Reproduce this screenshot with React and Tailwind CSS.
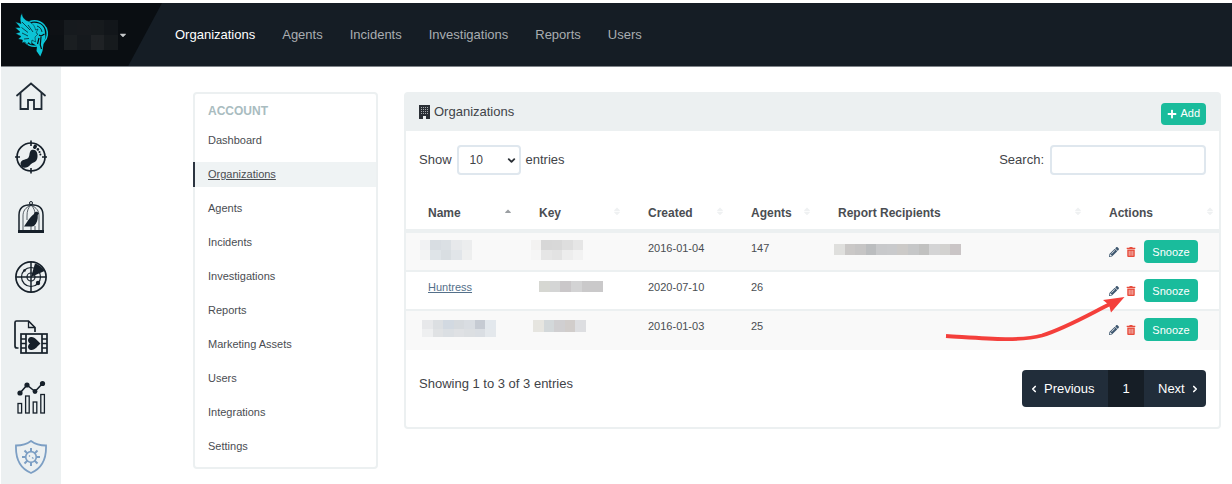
// src/pages/Organizations.jsx
import React, { useState } from "react";
import { FaPlus, FaPencilAlt, FaTrashAlt, FaCaretDown, FaCaretUp } from "react-icons/fa";
import { ChevronDown, ChevronLeft, ChevronRight } from "lucide-react";

const NAV_LINKS = ["Organizations", "Agents", "Incidents", "Investigations", "Reports", "Users"];

const ACCOUNT_LINKS = [
  "Dashboard",
  "Organizations",
  "Agents",
  "Incidents",
  "Investigations",
  "Reports",
  "Marketing Assets",
  "Users",
  "Integrations",
  "Settings",
];

const COLUMNS = [
  { label: "Name", width: "w-[111px]", sorted: true },
  { label: "Key", width: "w-[109px]" },
  { label: "Created", width: "w-[103px]" },
  { label: "Agents", width: "w-[87px]" },
  { label: "Report Recipients", width: "" },
  { label: "Actions", width: "w-[132px]" },
];

// Masked values: each entry is one line of colour blocks
const MASKS = {
  account: [
    ["bg-[#0e1115]", "bg-[#161a1e]", "bg-[#171a1e]", "bg-[#161a1d]", "bg-[#12161a]"],
    ["bg-[#0c1014]", "bg-[#1a1e21]", "bg-[#15191d]", "bg-[#1f2225]", "bg-[#161a1d]"],
  ],
  name1: [
    ["bg-[#f1f2f3]", "bg-[#d8dde2]", "bg-[#dbe0e4]", "bg-[#e7e9eb]", "bg-[#ecedee]"],
    ["bg-[#f3f4f4]", "bg-[#dfe4e8]", "bg-[#d9dee2]", "bg-[#e1e5e9]", "bg-[#eeefef]"],
  ],
  key1: [
    ["bg-[#f3f2f1]", "bg-[#d7d7d7]", "bg-[#d8d8d8]", "bg-[#dedede]", "bg-[#e6e6e6]"],
    ["bg-[#f6f6f6]", "bg-[#e6e6e6]", "bg-[#e3e3e3]", "bg-[#ededed]", "bg-[#f2f2f2]"],
  ],
  recipients1: [
    ["bg-[#dfdfdd]", "bg-[#cac8c7]", "bg-[#c6c5c5]", "bg-[#bbbdbf]", "bg-[#c8c9cb]", "bg-[#c9cacc]", "bg-[#cccac8]", "bg-[#c6c7c8]", "bg-[#c1c1c0]", "bg-[#d4d4d5]", "bg-[#d3d2d0]", "bg-[#cac5c6]"],
  ],
  key2: [["bg-[#d6d7d2]", "bg-[#d4d5d5]", "bg-[#cac7c9]", "bg-[#d3d3d4]", "bg-[#cac9ca]", "bg-[#cac9ca]"]],
  name3: [
    ["bg-[#e7e8ea]", "bg-[#dcdfe2]", "bg-[#d2d9e1]", "bg-[#d6dade]", "bg-[#d9dde2]", "bg-[#c6cbd3]", "bg-[#e3e8ed]"],
    ["bg-[#eeeff0]", "bg-[#e0e2e4]", "bg-[#dbdfe3]", "bg-[#dfe1e4]", "bg-[#dcdfe2]", "bg-[#dadee3]", "bg-[#e4e8ec]"],
  ],
  key3: [["bg-[#e6e5e0]", "bg-[#d3d8da]", "bg-[#d0cfd1]", "bg-[#d1cdcb]", "bg-[#dddee1]"]],
};

const ROWS = [
  { nameMask: "name1", keyMask: "key1", created: "2016-01-04", agents: 147, recipientsMask: "recipients1" },
  { name: "Huntress", keyMask: "key2", created: "2020-07-10", agents: 26 },
  { nameMask: "name3", keyMask: "key3", created: "2016-01-03", agents: 25 },
];

const MASK_SIZES = {
  account: "w-[68px] h-[30px]",
  name1: "-ml-2 w-[52px] h-5",
  key1: "-ml-2 w-[52px] h-5",
  recipients1: "-ml-1 mt-1 w-[127px] h-[11px]",
  key2: "mt-0.5 w-16 h-[11px]",
  name3: "-ml-1.5 mt-0.5 w-[74px] h-[17px]",
  key3: "-ml-1.5 mt-0.5 w-[53px] h-3",
};

const Mask = ({ id }) => (
  <div aria-hidden="true" className={`flex flex-col ${MASK_SIZES[id]}`}>
    {MASKS[id].map((line, i) => (
      <div key={i} className="flex flex-1">
        {line.map((color, j) => (
          <span key={j} className={`flex-1 ${color}`} />
        ))}
      </div>
    ))}
  </div>
);

const Logo = () => (
  <svg viewBox="0 0 34 44" className="w-[34px] h-11" fill="#0cc4d6" aria-hidden="true">
    <circle cx="20.500" cy="20.500" r="12.800" fill="none" stroke="#0cc4d6" strokeWidth="1.600" />
    {/* Helmet */}
    <path d="M18 10 C26 9 31 13 31 20 L31.500 24 L29.500 31 L28.500 38 L26.300 43.500 L22.500 38 L23 33 L18 30 Z" />
    {/* Wing */}
    <path
      d="M8 0 C8.500 4 10 6.500 14 8 C18 9.500 21 13 21.500 17 L24 16 L22 20 L24 21 L21 24 L21.500 29 L18 27 L17.500 32 L14.500 29.500 L13 32 L11 29 L8 30 L8.500 27 L4 26 L7 23.500 L1.500 20.500 L6 19 L1 14.500 L6 14.500 L1.300 8.700 L7 10.500 C5.500 7 6 3 8 0 Z"
      stroke="#0a0e12"
      strokeWidth="0.500"
    />
    <g stroke="#0a0e12" fill="none">
      <path d="M8 9 L16 17 M7.500 14.500 L14 19.500 M8 20 L14 23 M14 12 L19 19 M10 26 L15 25.500" strokeWidth="0.700" />
      <path d="M30.500 21 L27 23 L25 22 M27 24 L26.300 32 L27.500 36 M25 25 L23.500 31" strokeWidth="1.200" />
      <path d="M23 13 C26 14 27.500 16 28 19" strokeWidth="0.800" />
    </g>
  </svg>
);

const HomeIcon = () => (
  <svg viewBox="0 0 32 34" className="w-8 h-[34px]" fill="none" stroke="#1f2a35" strokeWidth="1.8" aria-hidden="true">
    <path d="M2 15.500 L16 3.500 L30 15.500" strokeLinecap="round" />
    <path d="M5.500 13 V29 H13 V20 H19 V29 H26.500 V13" />
  </svg>
);

const FootprintIcon = () => (
  <svg viewBox="0 0 32 34" className="w-8 h-[34px]" fill="#16202a" aria-hidden="true">
    <circle cx="16" cy="17" r="14" fill="none" stroke="#16202a" strokeWidth="1.7" />
    <path d="M16 0.500 V6 M16 28 V33.500 M0 17 H5 M27 17 H32" stroke="#16202a" strokeWidth="1.6" />
    <path d="M5.500 23.500 C6 19.500 10 20 12.500 18.500 C15.500 16.500 13.500 12 16.500 10 C20.500 8.500 23 12 22.500 17 C22 22.500 18 22 15.500 24.500 C12 29 6 29 5.500 23.500 Z" />
    <ellipse cx="20" cy="6.800" rx="1.800" ry="2.300" transform="rotate(30 20 6.800)" />
    <circle cx="22.900" cy="9.400" r="1.300" />
    <circle cx="24.500" cy="12" r="1.100" />
    <circle cx="25.400" cy="14.600" r="1" />
  </svg>
);

const CageIcon = () => (
  <svg viewBox="0 0 32 34" className="w-8 h-[34px]" fill="none" stroke="#16202a" aria-hidden="true">
    <circle cx="16" cy="3" r="1.500" strokeWidth="1" />
    <path d="M4 30 V15 C4 8 9 4.800 16 4.800 C23 4.800 28 8 28 15 V30" strokeWidth="1.5" />
    <path d="M16 5 C10 8 8 11 8 16 V30 M16 5 C13 8 12 11 12 16 V20 M16 5 C19 8 20 11 20 14 M16 5 C22 8 24 11 24 16 V30 M16 26 V30 M20 26 V30" strokeWidth="0.7" />
    <path d="M3 31.500 H29" strokeWidth="3" />
    <path d="M9 26.500 L13 20.500 C15 17.500 17 15.500 19 14 C19.500 11.500 22.500 11 24 13.500 L22.800 15 C23 19.500 22 23.500 19 26 L17 26.500 Z" fill="#16202a" stroke="none" />
  </svg>
);

const RadarIcon = () => (
  <svg viewBox="0 0 32 34" className="w-8 h-[34px]" fill="none" stroke="#16202a" strokeWidth="1.5" aria-hidden="true">
    <circle cx="16" cy="17" r="15.100" strokeWidth="1.700" />
    <circle cx="16" cy="17" r="9.500" strokeWidth="1.200" />
    <circle cx="16" cy="17" r="4" strokeWidth="1.200" />
    <path d="M16 2 V32 M1 17 H31" />
    <path d="M16 17 L20 3.500 C24 4.500 27 7 29.500 11 Z" fill="#16202a" stroke="none" />
    <circle cx="9.500" cy="10.500" r="1.300" fill="#16202a" stroke="none" />
    <circle cx="23" cy="23" r="2.200" fill="#16202a" stroke="none" />
  </svg>
);

const MediaIcon = () => (
  <svg viewBox="0 0 34 34" className="w-[34px] h-[34px]" fill="none" stroke="#16202a" strokeWidth="1.700" aria-hidden="true">
    <path d="M4.500 28 H3 Q1 28 1 26 V2.500 Q1 1 2.500 1 H14.500 L21 7.500 V12" />
    <path d="M14.500 1 V7.500 H21" strokeWidth="1.300" />
    <rect x="7" y="14" width="26" height="19" />
    <path d="M12 14 V33 M28 14 V33" />
    <path d="M7 19 H12 M7 23.500 H12 M7 28 H12 M28 19 H33 M28 23.500 H33 M28 28 H33" />
    <path d="M26.500 23.500 C23.500 26 21 30.500 17 30 C13.500 29.500 13 25.500 16 23.500 C13 21.500 13.500 17.500 17 17 C21 16.500 23.500 21 26.500 23.500 Z" fill="#16202a" stroke="none" />
  </svg>
);

const ChartIcon = () => (
  <svg viewBox="0 0 32 34" className="w-8 h-[34px]" fill="none" stroke="#16202a" strokeWidth="1.300" aria-hidden="true">
    <path d="M5 13 L12 5 L20 11.500 L27.500 3.500" strokeWidth="1.600" />
    <g fill="#16202a" stroke="none">
      <circle cx="5" cy="13" r="2.600" />
      <circle cx="12" cy="5" r="2.600" />
      <circle cx="20" cy="11.500" r="2.400" />
      <circle cx="27.500" cy="3.500" r="2.600" />
    </g>
    <rect x="3" y="23.500" width="3.600" height="9.500" />
    <rect x="10.600" y="16" width="3.600" height="17" />
    <rect x="18.200" y="22" width="3.600" height="11" />
    <rect x="25.800" y="14.500" width="3.600" height="18.500" />
  </svg>
);

const ShieldIcon = () => (
  <svg viewBox="0 0 32 34" className="w-8 h-[34px]" fill="none" stroke="#7d9fc4" strokeWidth="1.800" aria-hidden="true">
    <path d="M16 1 C12 4 6 5.500 1 5.500 C0.500 18 4 28 16 33 C28 28 31.500 18 31 5.500 C26 5.500 20 4 16 1 Z" />
    <circle cx="16" cy="17" r="5.300" strokeWidth="1.700" />
    <path d="M16 8 V12 M16 22 V26 M7 17 H11 M21 17 H25 M9.500 10.500 L12.500 13.500 M19.500 20.500 L22.500 23.500 M22.500 10.500 L19.500 13.500 M12.500 20.500 L9.500 23.500" strokeWidth="2" />
    <path d="M14 15.500 L15 16.500 M17 17.500 L18.500 18.500" strokeWidth="1.300" />
  </svg>
);

const BuildingIcon = () => (
  <svg viewBox="0 0 11 14" className="w-[11px] h-3.5" fill="#2b3036" aria-hidden="true">
    <path d="M0 0 H11 V14 H7 V11 H4 V14 H0 Z" />
    <g stroke="#a7abae" strokeWidth="1" strokeDasharray="1 1">
      <path d="M2 2.500 H9 M2 4.500 H9 M2 6.500 H9 M2 8.500 H9" />
    </g>
  </svg>
);

const SIDE_LINKS = [
  { label: "Home", Icon: HomeIcon },
  { label: "Footholds", Icon: FootprintIcon },
  { label: "Canaries", Icon: CageIcon },
  { label: "Recon", Icon: RadarIcon },
  { label: "Media", Icon: MediaIcon },
  { label: "Statistics", Icon: ChartIcon },
  { label: "Protection", Icon: ShieldIcon },
];

const TopBar = () => (
  <header className="flex h-16 border-b border-[#7f8489] bg-[#151d25] text-[13px]">
    <div className="flex w-[161px] items-center bg-[#0a0e12] pl-[13px] [clip-path:polygon(0_0,100%_0,79%_100%,0_100%)]">
      <Logo />
      <button type="button" aria-label="Switch account" className="ml-0.5 flex items-center text-[#c5c8ca]">
        <Mask id="account" />
        <FaCaretDown size={10} />
      </button>
    </div>
    <nav className="flex items-center gap-[27px] pl-[13px]">
      {NAV_LINKS.map((label, i) => (
        <a key={label} href="#" className={i === 0 ? "text-white" : "text-[#a9adb1]"}>
          {label}
        </a>
      ))}
    </nav>
  </header>
);

const AccountMenu = () => (
  <aside className="w-[185px] shrink-0 rounded border-2 border-[#ecf0f1] pt-[7px] pb-2">
    <h2 className="px-[13px] text-[12px] leading-5 font-bold text-[#a9bcc0]">ACCOUNT</h2>
    <ul className="mt-[7px] flex flex-col gap-[9px] text-[11px] leading-[25px] text-[#4a4d52]">
      {ACCOUNT_LINKS.map((label) => (
        <li key={label}>
          <a
            href="#"
            className={
              label === "Organizations"
                ? "-ml-0.5 block border-l-2 border-[#2c3440] bg-[#eff3f4] px-[13px] underline"
                : "block px-[13px]"
            }
          >
            {label}
          </a>
        </li>
      ))}
    </ul>
  </aside>
);

const SortMark = ({ sorted }) => (
  <span className="mb-1 flex flex-col text-[#eff1f2]" aria-hidden="true">
    <FaCaretUp size={10} className={sorted ? "text-[#9b9fa3]" : "-mb-1.5"} />
    {!sorted && <FaCaretDown size={10} />}
  </span>
);

const OrgTable = () => (
  <table className="mt-[22px] w-full table-fixed border-separate border-spacing-0 text-left text-[11px] leading-4 text-[#4a4d52]">
    <thead>
      <tr>
        {COLUMNS.map((col) => (
          <th key={col.label} scope="col" className={`h-9 border-b-4 border-[#ecf0f1] pr-1 pl-[22px] text-[12px] ${col.width}`}>
            <div className="flex items-center justify-between">
              {col.label}
              <SortMark sorted={col.sorted} />
            </div>
          </th>
        ))}
      </tr>
    </thead>
    <tbody className="[&_td]:h-[39px] [&_td]:border-[#ecf0f1] [&_td]:pt-[7px] [&_td]:pl-[22px] [&_tr:not(:last-child)_td]:border-b-2">
      {ROWS.map((row) => (
        <tr key={row.created} className="align-top odd:bg-[#f9f9f9]">
          <td>
            {row.name ? (
              <a href="#" className="text-[#54708a] underline">
                {row.name}
              </a>
            ) : (
              <Mask id={row.nameMask} />
            )}
          </td>
          <td>
            <Mask id={row.keyMask} />
          </td>
          <td>{row.created}</td>
          <td>{row.agents}</td>
          <td>{row.recipientsMask && <Mask id={row.recipientsMask} />}</td>
          <td>
            <div className="flex items-center">
              <button type="button" aria-label="Edit" className="text-[#3d566e]">
                <FaPencilAlt size={10} />
              </button>
              <button type="button" aria-label="Delete" className="ml-[7px] text-[#e74c3c]">
                <FaTrashAlt size={10} />
              </button>
              <button type="button" className="ml-2 h-[23px] w-[54px] rounded-sm bg-[#1abc9c] text-white">
                Snooze
              </button>
            </div>
          </td>
        </tr>
      ))}
    </tbody>
  </table>
);

const App = () => {
  const [pageSize, setPageSize] = useState("10");
  const [search, setSearch] = useState("");

  return (
    <div className="flex min-h-screen flex-col bg-white pt-[3px] pl-px font-['Liberation_Sans',Arial,sans-serif] text-[#3f4348]">
      <TopBar />
      <div className="flex flex-1">
        {/* Icon rail */}
        <nav className="flex w-[60px] shrink-0 flex-col items-center gap-[26px] bg-[#ecf0f1] pt-[13px]">
          {SIDE_LINKS.map(({ label, Icon }) => (
            <a key={label} href="#" aria-label={label}>
              <Icon />
            </a>
          ))}
        </nav>

        <main className="flex flex-1 items-start gap-[26px] pt-[25px] pr-[11px] pl-[132px]">
          <AccountMenu />

          <section className="relative flex-1 rounded border-2 border-[#ecf0f1] text-[13px]">
            <div className="flex h-[37px] items-center justify-between bg-[#ecf0f1] px-[13px] pb-0.5">
              <h1 className="flex items-center gap-1">
                <BuildingIcon />
                Organizations
              </h1>
              <button type="button" className="mt-1 flex h-[22px] items-center gap-[3px] rounded-sm bg-[#1abc9c] px-1.5 text-[11px] text-white">
                <FaPlus size={10} />
                Add
              </button>
            </div>

            <div className="flex items-center justify-between px-[13px] pt-3.5">
              <label className="flex items-center gap-[5px]">
                Show
                <span className="relative">
                  <select
                    value={pageSize}
                    onChange={(e) => setPageSize(e.target.value)}
                    className="block h-[30px] w-16 appearance-none rounded-sm border-2 border-[#dfe7ee] bg-white pl-[11px] text-[12px]"
                  >
                    <option>10</option>
                    <option>25</option>
                    <option>50</option>
                  </select>
                  <ChevronDown size={11} strokeWidth={4} className="pointer-events-none absolute top-2.5 right-1 text-[#2b3036]" />
                </span>
                entries
              </label>
              <label className="flex items-center gap-1.5">
                Search:
                <input
                  type="search"
                  value={search}
                  onChange={(e) => setSearch(e.target.value)}
                  className="h-[30px] w-[156px] rounded-sm border-2 border-[#dfe7ee] px-2"
                />
              </label>
            </div>

            <OrgTable />

            <div className="flex items-start justify-between px-[13px] pt-5 pb-5">
              <p className="mt-1 leading-5">Showing 1 to 3 of 3 entries</p>
              <div className="flex h-[37px] overflow-hidden rounded bg-[#212d3a] text-white">
                <button type="button" className="flex w-[86px] items-center gap-[5px] pl-[7px]">
                  <ChevronLeft size={10} strokeWidth={4} />
                  Previous
                </button>
                <button type="button" className="w-9 bg-[#161e26]">
                  1
                </button>
                <button type="button" className="flex w-[62px] items-center gap-[5px] pl-3.5">
                  Next
                  <ChevronRight size={10} strokeWidth={4} />
                </button>
              </div>
            </div>

            {/* Callout arrow pointing at the delete icon */}
            <svg viewBox="0 0 190 60" className="pointer-events-none absolute top-[196px] right-[89px] w-[190px] h-[60px]" fill="none" aria-hidden="true">
              <path d="M6 46 C40 48 78 52 102 45.500 C126 38 148 25 170 14" stroke="#f43f3b" strokeWidth="3.800" />
              <path d="M184.500 7 L163 10 L169 15 L171 22.500 Z" fill="#f43f3b" />
            </svg>
          </section>
        </main>
      </div>
    </div>
  );
};

export default App;
